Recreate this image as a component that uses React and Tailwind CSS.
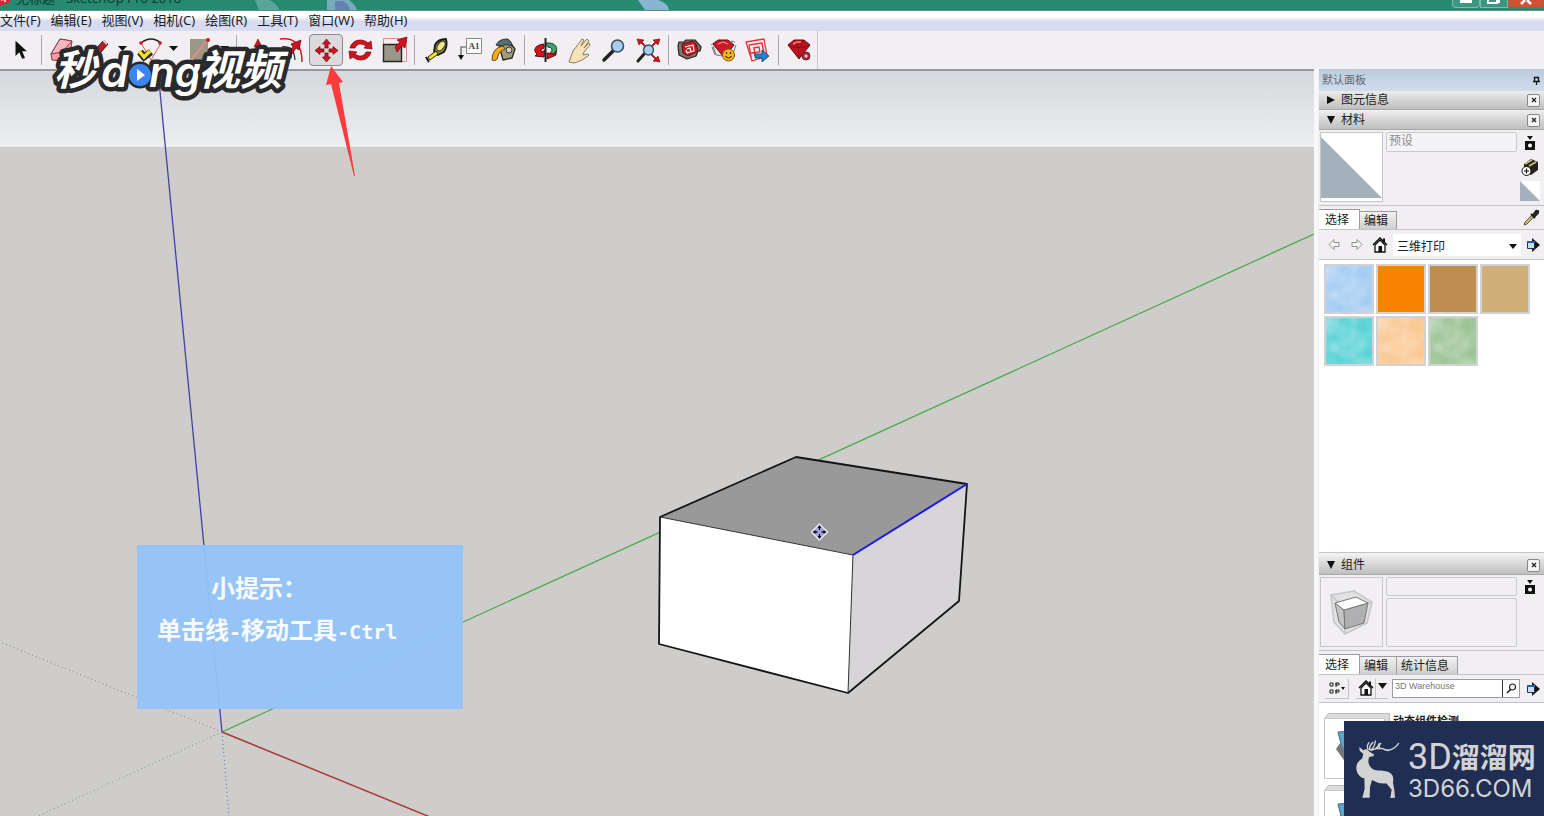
import React, { useState } from "react";
import clsx from "clsx";

const menus = [
  "文件(F)",
  "编辑(E)",
  "视图(V)",
  "相机(C)",
  "绘图(R)",
  "工具(T)",
  "窗口(W)",
  "帮助(H)",
];

const RED = "#d3111f";

const icons = {
  select: (
    <path d="M10 4v16l4-4 3 7 3-1-3-7h5z" fill="#111" transform="translate(-1 1) scale(.95)" />
  ),
  eraser: (
    <g stroke="#7c3f4a" strokeWidth="1" strokeLinejoin="round">
      <path d="M2 18 11 3l12 2-1 7-9 13-10-1z" fill="#f79aa8" />
      <path d="M11 3l12 2-10 11L2 18z" fill="#fbb6c0" />
      <path d="M13 17l-1 8" fill="none" />
    </g>
  ),
  pencil: (
    <g>
      <path d="M5 26 9 17 21 4l4 4-12 14z" fill="#b3202b" stroke="#4a1216" />
      <path d="M20 4l4 4" stroke="#ddd" strokeWidth="2" />
    </g>
  ),
  arc: (
    <g fill="none">
      <path d="M7 7q10-8 20 0" stroke="#222" strokeWidth="1.300" />
      <path d="M7 7 17 24 27 7" stroke="#e65a66" strokeWidth="1" />
      <circle cx="7" cy="7" r="1.800" fill={RED} />
      <circle cx="26" cy="7" r="1.800" fill={RED} />
    </g>
  ),
  rect: (
    <g>
      <path d="M5 3h18v22H5z" fill="#9b9889" />
      <path d="M6 24 23 3" stroke="#f08b8b" strokeWidth="1.600" />
      <circle cx="23" cy="4" r="2" fill={RED} />
    </g>
  ),
  push: (
    <g>
      <path d="M14 3l4 8h-2v6h-4v-6h-2z" fill={RED} stroke="#6d0a10" strokeWidth=".6" />
      <path d="M4 20l10-4 10 4-10 5z" fill="#a7a596" stroke="#333" />
    </g>
  ),
  offset: (
    <g fill="none">
      <path d="M2 3q22-3 22 23" stroke={RED} strokeWidth="1.400" />
      <path d="M4 11q12-2 13 13" stroke="#333" strokeWidth="1.300" />
      <path d="M11 16 15 11l-2-3 10-4-2 10-3-2-4 6z" fill={RED} stroke="#5d0a10" strokeWidth=".7" />
    </g>
  ),
  move: (
    <g fill={RED} stroke="#6d0a10" strokeWidth=".7" strokeLinejoin="round">
      <path d="M14.500 3l4 5h-2.400v4h-3.200V8h-2.400z" />
      <path d="M14.500 26l4-5h-2.400v-4h-3.200v4h-2.400z" />
      <path d="M3 14.500l5-4v2.400h4v3.200H8v2.400z" />
      <path d="M26 14.500l-5-4v2.400h-4v3.200h4v2.400z" />
    </g>
  ),
  rotate: (
    <g fill={RED} stroke="#6d0a10" strokeWidth=".7" strokeLinejoin="round">
      <path d="M4 12C6 3 17 2 22 7l3-2 1 8-8-1 2-2C16 7 11 7 9 12z" />
      <path d="M25 16c-2 9-13 10-18 5l-3 2-1-8 8 1-2 2c4 3 9 3 11-2z" />
    </g>
  ),
  scale: (
    <g>
      <path d="M3.500 2.500h23v23h-23z" fill="#f4eeee" stroke="#df8b90" />
      <path d="M3.500 8.500h18v17h-18z" fill="#9b9889" stroke="#222" strokeWidth="1.400" />
      <path d="M15 11l5-5-3-2 10-3-2 11-3-2-5 6z" fill={RED} stroke="#6d0a10" strokeWidth=".7" />
    </g>
  ),
  tape: (
    <g strokeLinejoin="round">
      <path d="M13 9q3-6 11-6 2 7-2 13l-6 3-4-3z" fill="#8f8731" stroke="#181818" strokeWidth="1.800" />
      <ellipse cx="19" cy="10" rx="3.200" ry="5.500" fill="#eee98e" stroke="#333" transform="rotate(35 19 10)" />
      <path d="M14 15 6 21l2 3 8-6z" fill="#f7ec18" stroke="#222" />
      <path d="M4 21l3 5" stroke="#111" strokeWidth="2" />
    </g>
  ),
  label: (
    <g>
      <path d="M10.500 2.500h15v15h-15z" fill="#fafafa" stroke="#888" />
      <text x="18" y="13" textAnchor="middle" fontSize="9" fontWeight="700" fontFamily="Liberation Serif, serif" fill="#444">A1</text>
      <path d="M10 11H5v8" fill="none" stroke="#555" strokeWidth="1.200" />
      <path d="M2 19h6l-3 5z" fill="#111" />
    </g>
  ),
  paint: (
    <g strokeLinejoin="round">
      <path d="M9 9 18 4l7 9-3 9-9 2z" fill="#a39b80" stroke="#29251c" strokeWidth="1.300" />
      <path d="M6 9q3-6 11-6 5 2 5 7-5-3-11 0z" fill="#53706f" stroke="#2b2b2b" />
      <path d="M13 10Q2 12 2 24q5 2 6-4 1-5 7-7z" fill="#f4ac1f" stroke="#6d4a0c" />
      <circle cx="19" cy="14" r="3" fill="#d8d2bd" stroke="#333" />
    </g>
  ),
  orbit: (
    <g strokeLinejoin="round">
      <path d="M13 7h3C24 7 26 12 24 17l-7 2 2-3q3-4-3-5z" fill="#3fa36a" stroke="#173d26" />
      <path d="M12 8C2 9 1 15 5 18l-2 2 9 1 1-7-3 2q-3-2 2-4z" fill={RED} stroke="#5d0a10" />
      <path d="M15 17l7 1 2-3v4l-9 4z" fill={RED} stroke="#5d0a10" />
      <path d="M13.500 2v24" stroke="#222" strokeWidth="2" />
    </g>
  ),
  pan: (
    <path
      d="M3 26 7 15 14 6l2-3 2 1-3 6 6-7 2 2-5 7 5-5 1 2-6 7-1 3 5-1q2 1 0 2l-6 4-5 2-3 1z"
      fill="#f5e2bb"
      stroke="#8a7c60"
      strokeWidth="1"
      strokeLinejoin="round"
    />
  ),
  zoom: (
    <g>
      <path d="M4 24 13 15" stroke="#222" strokeWidth="3.500" strokeLinecap="round" />
      <circle cx="17.500" cy="10" r="6" fill="#a9cdec" stroke="#394f63" strokeWidth="1.600" />
    </g>
  ),
  extents: (
    <g>
      <path d="M4 25 11 17" stroke="#222" strokeWidth="3" strokeLinecap="round" />
      <path
        d="M3 3l7 1-2 2 4 4-1 1-4-4-2 2zM26 3l-7 1 2 2-4 4 1 1 4-4 2 2zM26 26l-7-1 2-2-4-4 1-1 4 4 2-2z"
        fill={RED}
        stroke="#6d0a10"
        strokeWidth=".6"
      />
      <circle cx="14.500" cy="14" r="5" fill="#a9cdec" stroke="#394f63" strokeWidth="1.400" />
    </g>
  ),
  warehouse: (
    <g strokeLinejoin="round">
      <path d="M2 10 3 6l5 0 2-2 9 0 6 7-1 4-2 0-2 5-9 3-6-3-2-1z" fill="#7f7566" stroke="#29251f" strokeWidth="1.200" />
      <path d="M6 8 17 5l3 3 2 7-10 5-5-3z" fill="#c91926" stroke="#5d0a10" />
      <path d="M9 11l8-2 1 6-3 1-1-4-3 1M10 14l1 3 3-1" fill="none" stroke="#fff" strokeWidth="1.200" />
    </g>
  ),
  extension: (
    <g strokeLinejoin="round">
      <path d="M1 9l4-3 3 0M5 19l-3-8M3 10l3 9 7 1M25 6l-4-1M26 9l-3 9" fill="#e4e4e4" stroke="#777" />
      <path d="M3 8 8 4h10l6 5-7 9-5 1z" fill="#cc1926" stroke="#5d0a10" />
      <path d="M8 8l5-2 5 2" fill="none" stroke="#ff8d90" strokeWidth="1.200" />
      <circle cx="18.500" cy="19" r="6" fill="#f3b718" stroke="#7a5a0b" />
      <path d="M16.500 16v2M20.500 16v2M15.500 20q3 4 6 0" fill="none" stroke="#3f2c00" strokeWidth="1.200" />
    </g>
  ),
  layout: (
    <g strokeLinejoin="round">
      <path d="M2 6l18-3 3 17-15 5z" fill="#fbeeee" stroke="#df3340" strokeWidth="1.300" />
      <path d="M5 9l13-2 2 11M5 9l2 12M9 12l6-1 1 6M10 12l1 8M7 17l8-1" fill="none" stroke="#df3340" strokeWidth="1.400" />
      <path d="M11 18h7v-4l7 6-7 6v-4h-7z" fill="#1d83d6" stroke="#0d3c66" strokeWidth=".8" />
    </g>
  ),
  ruby: (
    <g strokeLinejoin="round">
      <path d="M2 9 8 4h10l6 5-11 14z" fill="#bf1420" stroke="#640b12" />
      <path d="M2 9q11 5 22 0M8 4l4 6 1 13M18 4l-4 6" stroke="#7a0c15" strokeWidth=".8" fill="none" />
      <path d="M7 8l4-2h4" stroke="#ff7b80" strokeWidth="1.500" fill="none" />
      <circle cx="20" cy="20" r="4" fill="#a5313c" stroke="#6b1a23" />
      <circle cx="20" cy="20" r="1.500" fill="#f3dddd" />
    </g>
  ),
};

const tools = [
  { id: "select", name: "选择" },
  { sep: true },
  { id: "eraser", name: "擦除" },
  { id: "pencil", name: "直线", more: true },
  { id: "arc", name: "圆弧", more: true },
  { id: "rect", name: "矩形", more: true },
  { sep: true },
  { id: "push", name: "推/拉" },
  { id: "offset", name: "偏移" },
  { id: "move", name: "移动" },
  { id: "rotate", name: "旋转" },
  { id: "scale", name: "缩放" },
  { sep: true },
  { id: "tape", name: "卷尺工具" },
  { id: "label", name: "文字" },
  { id: "paint", name: "材质" },
  { sep: true },
  { id: "orbit", name: "环绕观察" },
  { id: "pan", name: "平移" },
  { id: "zoom", name: "缩放视图" },
  { id: "extents", name: "缩放范围" },
  { sep: true },
  { id: "warehouse", name: "3D Warehouse" },
  { id: "extension", name: "Extension Warehouse" },
  { id: "layout", name: "LayOut" },
  { sep: true },
  { id: "ruby", name: "扩展程序管理器" },
];

const swatches = [
  { name: "蓝色", cls: "bg-[#a3ccf3]", cloud: true },
  { name: "橙色", cls: "bg-[#f98200]" },
  { name: "深木色", cls: "bg-[#bf8d4f]" },
  { name: "浅木色", cls: "bg-[#d0b078]" },
  { name: "青色", cls: "bg-[#5bd2d6]", cloud: true },
  { name: "桃色", cls: "bg-[#fac892]", cloud: true },
  { name: "绿色", cls: "bg-[#9cc495]", cloud: true },
];

const TitleBar = () => (
  <header className="relative flex h-[11px] shrink-0 items-end justify-between overflow-hidden border-b border-[#5d8f82] bg-[#258a70]">
    {/* desktop icons showing through the glass frame */}
    <svg width="420" height="10" viewBox="0 0 420 10" className="absolute top-0 left-[255px]">
      <path d="M0 0h14q8 3 10 10H4z" fill="#8fbfc6" opacity=".5" />
      <path d="M72 0h22q6 4 8 10H72z" fill="#93b4d4" opacity=".75" />
      <path d="M80 1h8q6 3 7 9H80z" fill="#5c6fae" opacity=".7" />
      <path d="M383 0h20q10 3 11 10h-24z" fill="#93b9dc" opacity=".9" />
    </svg>
    <div className="relative flex items-end gap-1 pb-1">
      <svg width="12" height="12" viewBox="0 0 12 12" className="shrink-0">
        <path d="M0 0h10v8l-10 4z" fill="#e0232e" />
        <path d="M1 6l4-1v3" stroke="#fff" strokeWidth="1.500" fill="none" />
      </svg>
      <span className="text-[13px] leading-4 whitespace-nowrap text-[#123c33]">无标题 - SketchUp Pro 2018</span>
    </div>
    <div className="relative flex h-[10px] w-[92px] self-start">
      <button aria-label="最小化" className="flex h-2 flex-1 justify-center rounded-b border border-t-0 border-[#7dbcab] bg-[#3c9680]">
        <span className="h-[3px] w-3 bg-white" />
      </button>
      <button aria-label="最大化" className="flex h-2 flex-1 justify-center border border-t-0 border-[#7dbcab] bg-[#3c9680]">
        <svg width="14" height="5" viewBox="0 0 14 5">
          <path d="M1 0v3h9V0M12 0v3" stroke="#fff" strokeWidth="2" fill="none" />
        </svg>
      </button>
      <button aria-label="关闭" className="flex h-2 w-9 justify-center border border-t-0 border-[#a85a44] bg-[#cf5234]">
        <svg width="12" height="5" viewBox="0 0 12 5">
          <path d="M1 4l4-4M11 4L7 0" stroke="#fff" strokeWidth="2.500" fill="none" />
        </svg>
      </button>
    </div>
  </header>
);

const Toolbar = () => {
  const [active, setActive] = useState("move");

  return (
    <div className="flex h-[38px] shrink-0 bg-[#f1eff1]">
      <div className="flex items-center border-r border-[#c9c9cd] pl-1">
        {tools.map((tool, index) =>
          tool.sep ? (
            <span key={index} className="mr-1 ml-[3px] h-[30px] w-px bg-[#a9a9ad]" />
          ) : (
            <React.Fragment key={tool.id}>
              <button
                aria-label={tool.name}
                onClick={() => setActive(tool.id)}
                className={clsx(
                  "flex h-8 w-[34px] items-center justify-center rounded-sm border",
                  active === tool.id ? "border-[#8b8b8d] bg-[#dcdadd]" : "border-transparent"
                )}
              >
                <svg width="28" height="28" viewBox="0 0 28 28" className="shrink-0">
                  {icons[tool.id]}
                </svg>
              </button>
              {tool.more && (
                <button aria-label={`${tool.name}选项`} className="flex w-[17px] justify-center pb-1">
                  <svg width="9" height="5" viewBox="0 0 9 5">
                    <path d="M0 0h9L4.500 5z" fill="#111" />
                  </svg>
                </button>
              )}
            </React.Fragment>
          )
        )}
      </div>
    </div>
  );
};

const Viewport = () => (
  <main className="relative min-w-0 flex-1 overflow-hidden border-t-2 border-[#98989a] bg-[#cecdcb]">
    <svg viewBox="0 71 1314 745" preserveAspectRatio="xMinYMin slice" className="block h-full w-full">
      <defs>
        <linearGradient id="sky" x1="0" y1="0" x2="0" y2="1">
          <stop offset="0" stopColor="#d6d8dd" />
          <stop offset="1" stopColor="#edeef0" />
        </linearGradient>
      </defs>
      <rect x="0" y="71" width="1314" height="76" fill="url(#sky)" />
      {/* axes */}
      <path d="M222 732 1314 234" stroke="#4bab4b" strokeWidth="1.300" />
      <path d="M222 732 158 71" stroke="#4240a8" strokeWidth="1.300" />
      <path d="M222 732 430 817" stroke="#a83a3a" strokeWidth="1.500" />
      <path d="M222 732 0 642" stroke="#b06a6a" strokeDasharray="1 3" />
      <path d="M222 732 36 817" stroke="#5fa85f" strokeDasharray="1 3" />
      <path d="M222 732 229 817" stroke="#6464b4" strokeDasharray="1 3" />
      {/* box */}
      <path d="M660 517 796 457 967 484 853 555z" fill="#99999a" />
      <path d="M660 517 853 555 848 693 659 644z" fill="#fff" />
      <path d="M853 555 967 484 959 601 848 693z" fill="#d7d5d8" />
      <path
        d="M660 517 796 457 967 484 959 601 848 693 659 644z"
        fill="none"
        stroke="#141414"
        strokeWidth="1.800"
        strokeLinejoin="round"
      />
      <path d="M660 517 853 555 848 693" fill="none" stroke="#333" strokeWidth="1" />
      <path d="M853 555 967 484" stroke="#1a1ae0" strokeWidth="2" />
      {/* move cursor */}
      <g transform="translate(819.500 532)">
        <path d="M0-8 8 0 0 8-8 0z" fill="#a3a6de" stroke="#e8e8f4" strokeWidth="1.500" />
        <path d="M0-7 2-4h-4zM0 7 2 4h-4zM-7 0l3-2v4zM7 0 4-2v4z" fill="#111" />
        <path d="M0-5v3M0 5V2M-5 0h3M5 0H2" stroke="#111" strokeWidth="1.300" />
      </g>
    </svg>

    <aside className="absolute top-[474px] left-[137px] flex h-[164px] w-[326px] flex-col bg-[#94c3f8]/95 pt-[23px] pl-5 text-2xl font-bold text-[#f7fbff]">
      <p className="pl-[54px] leading-[40px]">小提示：</p>
      <p className="leading-[44px]">
        单击线<span className="font-['DejaVu_Sans_Mono',monospace] text-xl">-</span>移动工具
        <span className="font-['DejaVu_Sans_Mono',monospace] text-xl">-Ctrl</span>
      </p>
    </aside>
  </main>
);

const SectionHeader = ({ title, open }) => (
  <div className="flex h-[19px] shrink-0 items-center justify-between border-b border-[#a9a9a9] bg-linear-to-b from-[#ececec] to-[#bfbfbf] pr-1 pl-2">
    <button aria-expanded={open} className="flex items-center gap-1.5">
      <svg width="8" height="8" viewBox="0 0 8 8">
        <path d={open ? "M0 0h8L4 8z" : "M0 0v8l8-4z"} fill="#111" />
      </svg>
      <h2 className="text-xs">{title}</h2>
    </button>
    <button aria-label={`关闭${title}`} className="flex size-[13px] items-center justify-center rounded-xs border border-[#888] bg-[#f4f4f4]">
      <svg width="6" height="6" viewBox="0 0 6 6">
        <path d="M1 1l4 4M5 1L1 5" stroke="#222" strokeWidth="1.300" />
      </svg>
    </button>
  </div>
);

const Tabs = ({ items, children }) => {
  const [current, setCurrent] = useState(items[0]);

  return (
    <div className="flex h-6 shrink-0 items-end border-b border-[#c4c4c6] text-xs" role="tablist">
      {items.map((item) => (
        <button
          key={item}
          role="tab"
          aria-selected={item === current}
          onClick={() => setCurrent(item)}
          className={clsx(
            "border-t border-r border-[#9c9ca0] leading-4",
            item === current
              ? "h-5 bg-white pr-2.5 pl-1.5"
              : "h-[18px] bg-linear-to-b from-[#f2f2f2] to-[#d0d0d2] pr-2 pl-1"
          )}
        >
          {item}
        </button>
      ))}
      {children}
    </div>
  );
};

const HomeIcon = () => (
  <svg width="16" height="16" viewBox="0 0 16 16" className="shrink-0">
    <path d="M1 8 8 1l7 7" fill="none" stroke="#111" strokeWidth="1.500" />
    <path d="M12 1.500v4" stroke="#111" strokeWidth="2" />
    <path d="M3 8v7h10V8L8 3z" fill="#f8f8f8" stroke="#111" strokeWidth="1.300" />
    <path d="M6.500 9h3.500v6H6.500z" fill="#111" />
  </svg>
);

const DetailsIcon = () => (
  <svg width="14" height="14" viewBox="0 0 14 14" className="shrink-0">
    <path d="M6 0l8 7-8 7z" fill="#111" />
    <path d="M1.500 3.500h7v7h-7z" fill="#c8dcf2" stroke="#234" />
    <path d="M1 3h8v2H1z" fill="#2b5f9c" />
  </svg>
);

const PaneIcon = () => (
  <svg width="12" height="14" viewBox="0 0 12 14">
    <path d="M1 0h10v4H1z" fill="#fafafa" />
    <path d="M3 0h6L6 4z" fill="#111" />
    <path d="M1 5h10v9H1z" fill="#111" />
    <circle cx="6" cy="9.500" r="2" fill="#fff" />
  </svg>
);

const BackIcon = ({ flip }) => (
  <svg width="13" height="13" viewBox="0 0 13 13" className={clsx("shrink-0", flip && "-scale-x-100")}>
    <path d="M1 6.500 6 1.500v3h5v4H6v3z" fill="#f6f6f6" stroke="#8f8f92" strokeLinejoin="round" />
  </svg>
);

const Cloud = () => (
  <svg viewBox="0 0 46 46" className="h-full w-full">
    <filter id="cloud" x="0" y="0" width="100%" height="100%">
      <feTurbulence type="fractalNoise" baseFrequency=".06" numOctaves="2" seed="4" />
      <feColorMatrix values="0 0 0 0 1  0 0 0 0 1  0 0 0 0 1  .7 0 0 0 -.18" />
    </filter>
    <rect width="46" height="46" filter="url(#cloud)" />
  </svg>
);

const Materials = () => (
  <>
    <div className="flex h-[76px] shrink-0 gap-[3px] border-b border-[#c4c4c6] pt-0.5 pl-px">
      <div className="h-[70px] w-[63px] border border-[#c6c6c8] bg-white">
        <svg viewBox="0 0 61 68" className="h-full w-full">
          <path d="M0 4 61 65H0z" fill="#a4b1bd" />
        </svg>
      </div>
      <input
        aria-label="材质名称"
        defaultValue="预设"
        className="h-5 w-[131px] rounded-xs border border-[#cacacc] bg-[#f4f3f5] px-0.5 pb-1 text-xs text-[#8c8c8c]"
      />
      <div className="flex flex-1 flex-col items-center gap-2 pt-1 pr-1">
        <button aria-label="显示辅助选择窗格">
          <PaneIcon />
        </button>
        <button aria-label="创建材质">
          <svg width="18" height="19" viewBox="0 0 18 19">
            <path d="M3 6l7-5 7 3v8l-7 5-7-3z" fill="#26241b" />
            <path d="M4 6l7-4M8 8l7-4" stroke="#c9c48f" strokeWidth="1.500" />
            <circle cx="5.500" cy="13" r="4.500" fill="#fff" stroke="#111" />
            <path d="M5.500 10.500v5M3 13h5" stroke="#111" strokeWidth="1.200" />
          </svg>
        </button>
        <svg width="20" height="20" viewBox="0 0 20 20" className="-mt-1 shrink-0">
          <path d="M0 0h20v20H0z" fill="#fff" />
          <path d="M0 0l20 20H0z" fill="#a4b1bd" />
        </svg>
      </div>
    </div>

    <Tabs items={["选择", "编辑"]}>
      <button aria-label="样本颜料" className="mr-1 mb-0.5 ml-auto">
        <svg width="18" height="18" viewBox="0 0 18 18">
          <path d="M2 16l1-3 7-7 2 2-7 7z" fill="#c9b26a" stroke="#444" strokeWidth=".8" />
          <path d="M9 5l4 4M11 6l3-4q3-1 2 2l-4 4z" stroke="#222" strokeWidth="2" fill="#333" />
        </svg>
      </button>
    </Tabs>

    <div className="flex h-[30px] shrink-0 items-center gap-[9px] border-b border-[#c4c4c6] pr-1 pl-[9px]">
      <button aria-label="后退"><BackIcon /></button>
      <button aria-label="前进"><BackIcon flip /></button>
      <button aria-label="在模型中"><HomeIcon /></button>
      <div className="relative -ml-1 min-w-0 flex-1">
        <select aria-label="材质库" className="block h-[22px] w-full appearance-none bg-white pt-1 pl-1 text-xs">
          <option>三维打印</option>
        </select>
        <svg width="8" height="5" viewBox="0 0 8 5" className="pointer-events-none absolute top-2.5 right-1">
          <path d="M0 0h8L4 5z" fill="#111" />
        </svg>
      </div>
      <button aria-label="详细信息" className="-ml-1"><DetailsIcon /></button>
    </div>

    <div className="min-h-0 flex-1 bg-white pt-1 pl-[5px]">
      <div className="grid w-fit grid-cols-4 gap-0.5">
        {swatches.map((swatch) => (
          <button
            key={swatch.name}
            aria-label={swatch.name}
            className={clsx("size-[50px] border-2 border-[#d2d2d4]", swatch.cls)}
          >
            {swatch.cloud && <Cloud />}
          </button>
        ))}
      </div>
    </div>
  </>
);

const FolderThumb = () => (
  <svg width="66" height="66" viewBox="0 0 66 66" className="shrink-0">
    <path d="M.500 5.500l4-5h61v60l-5 5H.500z" fill="#dcdcde" stroke="#bbb" />
    <path d="M.500 5.500h60v60H.500z" fill="#fff" stroke="#c8c8c8" />
    <path d="M14 19l16-1 6 26-14 6z" fill="#5ba6cf" stroke="#45667a" />
    <path d="M12 36l10 14 6-2-12-18z" fill="#777" />
  </svg>
);

const Components = () => (
  <>
    <div className="flex h-[76px] shrink-0 gap-[3px] border-b border-[#c4c4c6] pt-0.5 pl-px">
      <div className="flex h-[70px] w-[63px] items-center justify-center border border-[#c6c6c8]">
        <svg width="43" height="45" viewBox="0 0 43 45">
          <path d="M1 5 24 1l18 11-5 21-22 11L4 32z" fill="#e2e2e4" stroke="#c6c6c8" strokeWidth="1.500" />
          <path d="M1 5l13 13 28-6M14 18l1 26" fill="none" stroke="#c6c6c8" strokeWidth="1.500" />
          <path d="M5 13l9 7 1 19-6-7z" fill="#c4c4c6" stroke="#777" />
          <path d="M14 20l24-7-4 20-19 6z" fill="#b0b0b2" stroke="#777" />
          <path d="M5 13l21-6 12 6-24 7z" fill="#fff" stroke="#777" />
        </svg>
      </div>
      <div className="flex w-[131px] flex-col gap-0.5">
        <input aria-label="组件名称" className="h-[19px] w-full rounded-xs border border-[#cacacc]" />
        <textarea aria-label="组件说明" className="block h-[49px] w-full resize-none rounded-xs border border-[#cacacc]" />
      </div>
      <div className="flex flex-1 flex-col items-center pt-[3px] pr-1">
        <button aria-label="显示辅助选择窗格">
          <PaneIcon />
        </button>
      </div>
    </div>

    <Tabs items={["选择", "编辑", "统计信息"]} />

    <div className="flex h-7 shrink-0 items-center border-b border-[#c4c4c6] pr-1 pl-1.5">
      <button aria-label="视图选项" className="flex h-5 w-6 items-center justify-center border-r border-b border-[#c4c4c6]">
        <svg width="16" height="12" viewBox="0 0 16 12">
          <path d="M1 1h3v3H1zM7 1h3v2H7zM1 8h3v3H1zM7 8h3v2H7zM7 1v4M7 8v4" fill="none" stroke="#222" />
          <path d="M12 5h4l-2 3z" fill="#111" />
        </svg>
      </button>
      <button aria-label="在模型中" className="ml-[7px] flex h-5 w-5 items-center justify-center border-r border-b border-[#c4c4c6]">
        <HomeIcon />
      </button>
      <button aria-label="导航" className="flex h-5 w-3 justify-center border-b border-[#c4c4c6] pt-1">
        <svg width="9" height="6" viewBox="0 0 9 6">
          <path d="M0 0h9L4.500 6z" fill="#111" />
        </svg>
      </button>
      <div className="ml-1 flex h-[19px] min-w-0 flex-1 border border-[#9c9ca0] bg-white">
        <input
          aria-label="搜索 3D Warehouse"
          placeholder="3D Warehouse"
          className="min-w-0 flex-1 px-0.5 pb-1 font-['Liberation_Sans',sans-serif] text-[9px] placeholder:text-[#777]"
        />
        <button aria-label="搜索" className="flex w-[17px] items-center justify-center border-l border-[#333]">
          <svg width="11" height="11" viewBox="0 0 11 11">
            <circle cx="6.500" cy="4" r="3" fill="none" stroke="#222" strokeWidth="1.200" />
            <path d="M4.500 6.500 1 10" stroke="#222" strokeWidth="1.600" />
          </svg>
        </button>
      </div>
      <button aria-label="详细信息" className="ml-1.5"><DetailsIcon /></button>
    </div>

    <ul className="flex h-[113px] shrink-0 flex-col gap-1.5 overflow-hidden bg-white pt-2.5 pl-[5px]">
      <li className="flex shrink-0 gap-[3px]">
        <FolderThumb />
        <b className="text-[11px] leading-4">动态组件检测</b>
      </li>
      <li className="flex shrink-0">
        <FolderThumb />
      </li>
    </ul>
  </>
);

const Tray = () => (
  <aside className="flex w-[230px] shrink-0 flex-col border-l-4 border-[#f8f8fa] bg-[#f1eff1] pl-px">
    <div className="flex h-[22px] shrink-0 items-center justify-between bg-linear-to-b from-[#bccbdd] to-[#d0dceb] pr-1 pl-[3px]">
      <h1 className="text-[11px] text-[#63676e]">默认面板</h1>
      <button aria-label="固定面板">
        <svg width="7" height="9" viewBox="0 0 7 9">
          <path d="M1.500 1.500h4v4h-4zM0 5.500h7M3.500 6v3" fill="none" stroke="#111" strokeWidth="1.300" />
        </svg>
      </button>
    </div>
    <SectionHeader title="图元信息" />
    <div className="h-px shrink-0" />
    <SectionHeader title="材料" open />
    <Materials />
    <div className="h-1 shrink-0 border-t border-[#c4c4c6]" />
    <SectionHeader title="组件" open />
    <Components />
  </aside>
);

const VideoLogo = () => (
  <svg width="244" height="64" viewBox="48 40 244 64" className="pointer-events-none absolute top-10 left-12">
    <g
      fill="#fff"
      stroke="#2a2a2c"
      strokeWidth="9"
      strokeLinejoin="round"
      paintOrder="stroke"
      fontWeight="600"
      fontStyle="italic"
      fontFamily="Inter, 'Noto Sans CJK SC', sans-serif"
    >
      <circle cx="140" cy="75" r="9" />
      <text x="149" y="87" fontSize="42">ng</text>
      <text x="101" y="87" fontSize="44">d</text>
      <text x="54" y="85" fontSize="42" fontWeight="700">秒</text>
      <text x="198" y="85" fontSize="42" fontWeight="700">视频</text>
    </g>
    <path d="M140 52l4 5 7-5" fill="none" stroke="#2a2a2c" strokeWidth="7" />
    <path d="M139 51l5 6 6-6" fill="none" stroke="#f6e21c" strokeWidth="3.500" />
    <circle cx="140" cy="75" r="11" fill="#3b86ee" />
    <path d="M137 69l8 6-8 6z" fill="#fff" />
  </svg>
);

const SiteLogo = () => (
  <div className="absolute right-0 bottom-0 flex h-[95px] w-[200px] items-center gap-1 bg-[#202e54] pl-[11px] text-[#d3d3d3]">
    <svg width="45" height="58" viewBox="33 56 135 174" className="shrink-0" fill="currentColor">
      <path d="M46 77l12 10 9-4 10 8 14 9-3 5-12 2c-5 10-4 22 6 33 8 8 20 7 34 8 18 1 31 8 32 24l-1 12 4 22 2 23-14 1 4-25-16-19q-22 3-43-10l-6 20-1 33H55l7-27-1-31c-14-3-24-15-24-32 0-14 8-21 17-27l4-14-11-10z" />
      <path
        d="M72 84q-5-10 3-20M76 85q0-12 11-22M79 86q13-6 15-27M84 86q18-4 21-19M80 87q26-10 40-4 24 10 44-17M108 82q-6-8 2-16M134 88q-10 0-16-5"
        fill="none"
        stroke="currentColor"
        strokeWidth="4"
        strokeLinecap="round"
      />
    </svg>
    <div className="flex flex-col pl-1 whitespace-nowrap">
      <div className="flex items-center leading-[34px]">
        <span className="font-[Roboto,sans-serif] text-4xl">3D</span>
        <span className="text-[28px] font-bold">溜溜网</span>
      </div>
      <span className="font-[Inter,sans-serif] text-2xl leading-6">3D66.COM</span>
    </div>
  </div>
);

export default function App() {
  return (
    <div className="relative flex h-screen flex-col overflow-hidden bg-[#f1eff1] font-['Noto_Sans','Noto_Sans_CJK_SC',sans-serif] text-[#1c1c1c]">
      <TitleBar />
      <nav className="flex h-5 shrink-0 items-center gap-2.5 bg-linear-to-b from-white from-30% to-[#d8dcf2] to-50% text-[13px] whitespace-nowrap">
        {menus.map((menu) => (
          <button key={menu}>{menu}</button>
        ))}
      </nav>
      <Toolbar />
      <div className="flex min-h-0 flex-1">
        <Viewport />
        <Tray />
      </div>
      <VideoLogo />
      <svg width="36" height="112" viewBox="0 0 36 112" className="pointer-events-none absolute top-[66px] left-[322px]">
        <path d="M9 0 21 16l-4 1 16 93h-1L9 18l-5 1z" fill="#fb3b3d" />
      </svg>
      <SiteLogo />
    </div>
  );
}
